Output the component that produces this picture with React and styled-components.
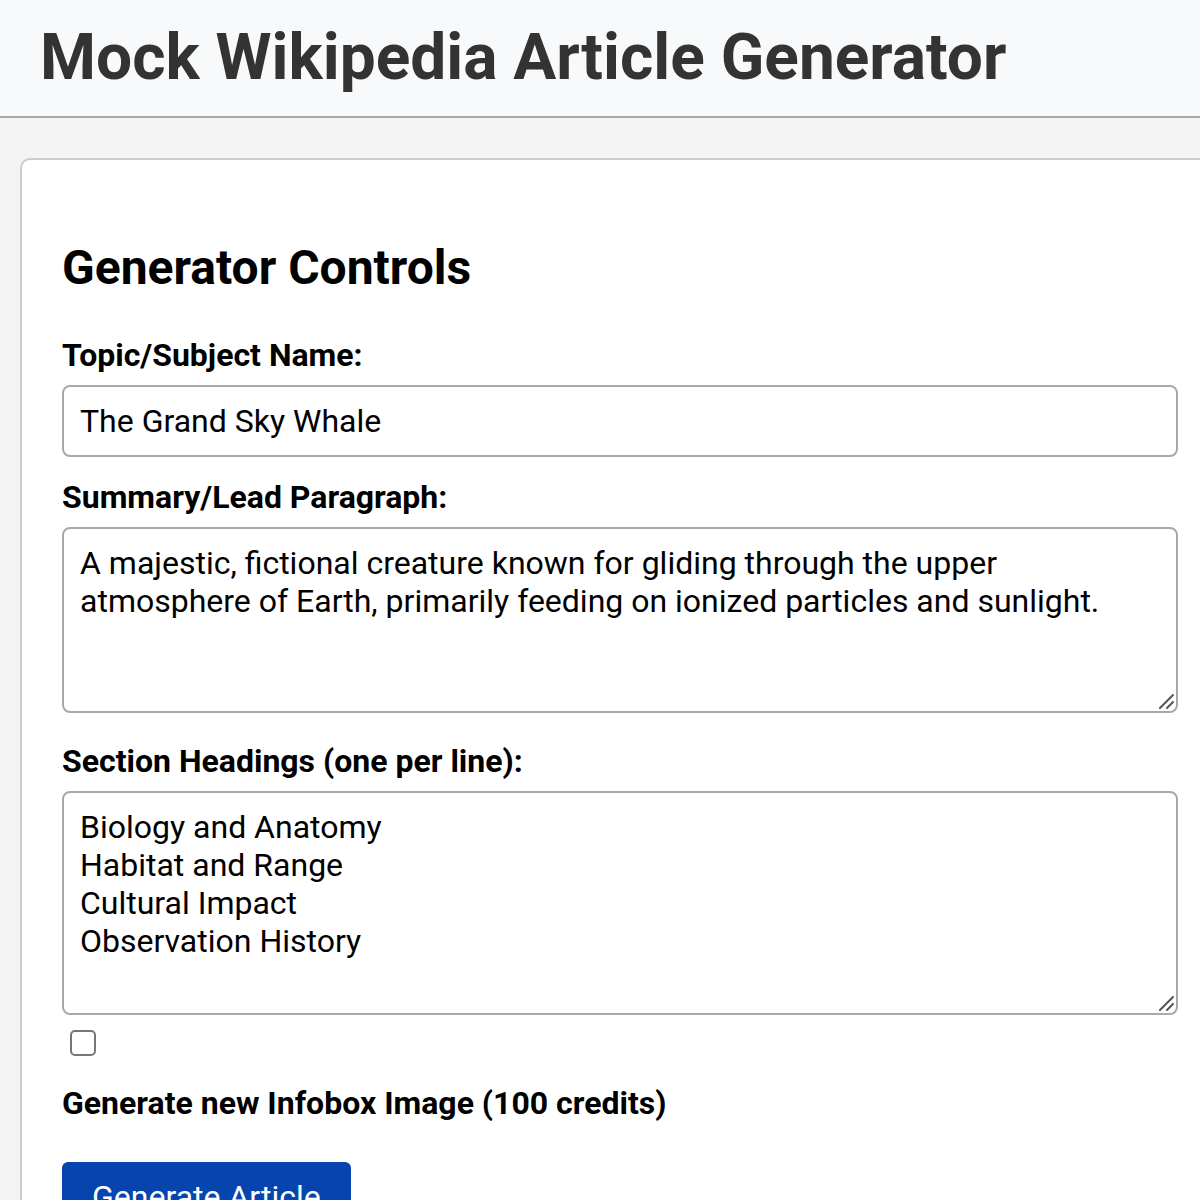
import React, { useState } from "react";
import styled, { createGlobalStyle } from "styled-components";

const GlobalStyle = createGlobalStyle`
  html, body {
    margin: 0;
    padding: 0;
    background: #f4f4f4;
    overflow: hidden;
  }
  body {
    font-family: Roboto, "Liberation Sans", Arial, sans-serif;
  }
  * { box-sizing: border-box; }
`;

const Header = styled.header`
  background: #f8f9fa;
  border-bottom: 2px solid #a2a9b1;
  padding: 20px 40px;
`;

const Title = styled.h1`
  margin: 0;
  font-size: 64px;
  line-height: 76px;
  font-weight: 700;
  color: #333;
  white-space: nowrap;
`;

const Main = styled.main`
  display: flex;
  padding: 40px 20px;
`;

const Card = styled.section`
  flex: 0 0 1200px;
  width: 1200px;
  background: #fff;
  border: 2px solid #cccccc;
  border-radius: 10px;
  padding: 40px;
`;

const SectionTitle = styled.h2`
  margin: 40px 0;
  font-size: 48px;
  line-height: 56px;
  font-weight: 700;
  color: #000;
`;

const Label = styled.label`
  display: block;
  font-size: 32px;
  line-height: 38px;
  font-weight: 700;
  color: #000;
  margin-bottom: ${(p) => p.$mb ?? 11}px;
`;

const TextInput = styled.input`
  display: block;
  width: 100%;
  height: 72px;
  margin: 0 0 21px;
  padding: 0 16px;
  border: 2px solid #a9a9a9;
  border-radius: 8px;
  font-family: inherit;
  font-size: 32px;
  color: #000;
  background: #fff;
  outline: none;
`;

const AreaWrap = styled.div`
  position: relative;
  margin-bottom: ${(p) => p.$mb}px;
`;

const TextArea = styled.textarea`
  display: block;
  width: 100%;
  height: ${(p) => p.$h}px;
  margin: 0;
  padding: 15px 16px;
  border: 2px solid #a9a9a9;
  border-radius: 8px;
  font-family: inherit;
  font-size: 32px;
  line-height: 38px;
  color: #000;
  background: #fff;
  resize: none;
  outline: none;
`;

const Grip = styled.svg`
  position: absolute;
  right: 4px;
  bottom: 4px;
  width: 16px;
  height: 16px;
  pointer-events: none;
`;

const CheckRow = styled.div`
  display: flex;
  padding-left: 8px;
  margin-bottom: 28px;
`;

const Check = styled.input`
  appearance: none;
  margin: 0;
  width: 26px;
  height: 26px;
  border: 2px solid #767676;
  border-radius: 5px;
  background: #fff;
  cursor: pointer;
  &:checked {
    background: #0645ad;
    border-color: #0645ad;
  }
`;

const Button = styled.button`
  display: inline-block;
  margin-top: 12px;
  padding: 16px 30px 14px;
  border: none;
  border-radius: 6px;
  background: #0645ad;
  color: #fff;
  font-family: inherit;
  font-size: 32px;
  line-height: 38px;
  cursor: pointer;
`;

const ResizeGrip = () => (
  <Grip viewBox="0 0 16 16">
    <path d="M2 15 L15 2 M9 15 L15 9" stroke="#555" strokeWidth="2" strokeLinecap="round" />
  </Grip>
);

export default function App() {
  const [topic, setTopic] = useState("The Grand Sky Whale");
  const [summary, setSummary] = useState(
    "A majestic, fictional creature known for gliding through the upper atmosphere of Earth, primarily feeding on ionized particles and sunlight."
  );
  const [sections, setSections] = useState(
    "Biology and Anatomy\nHabitat and Range\nCultural Impact\nObservation History"
  );
  const [image, setImage] = useState(false);

  return (
    <>
      <GlobalStyle />
      <Header>
        <Title>Mock Wikipedia Article Generator</Title>
      </Header>
      <Main>
        <Card>
          <SectionTitle>Generator Controls</SectionTitle>
          <Label htmlFor="topic">Topic/Subject Name:</Label>
          <TextInput id="topic" value={topic} onChange={(e) => setTopic(e.target.value)} />
          <Label htmlFor="summary">Summary/Lead Paragraph:</Label>
          <AreaWrap $mb={29}>
            <TextArea id="summary" $h={186} value={summary} onChange={(e) => setSummary(e.target.value)} />
            <ResizeGrip />
          </AreaWrap>
          <Label htmlFor="sections">Section Headings (one per line):</Label>
          <AreaWrap $mb={15}>
            <TextArea id="sections" $h={224} value={sections} onChange={(e) => setSections(e.target.value)} />
            <ResizeGrip />
          </AreaWrap>
          <CheckRow>
            <Check type="checkbox" id="img" checked={image} onChange={(e) => setImage(e.target.checked)} />
          </CheckRow>
          <Label htmlFor="img" $mb={28}>Generate new Infobox Image (100 credits)</Label>
          <Button type="button">Generate Article</Button>
        </Card>
      </Main>
    </>
  );
}
